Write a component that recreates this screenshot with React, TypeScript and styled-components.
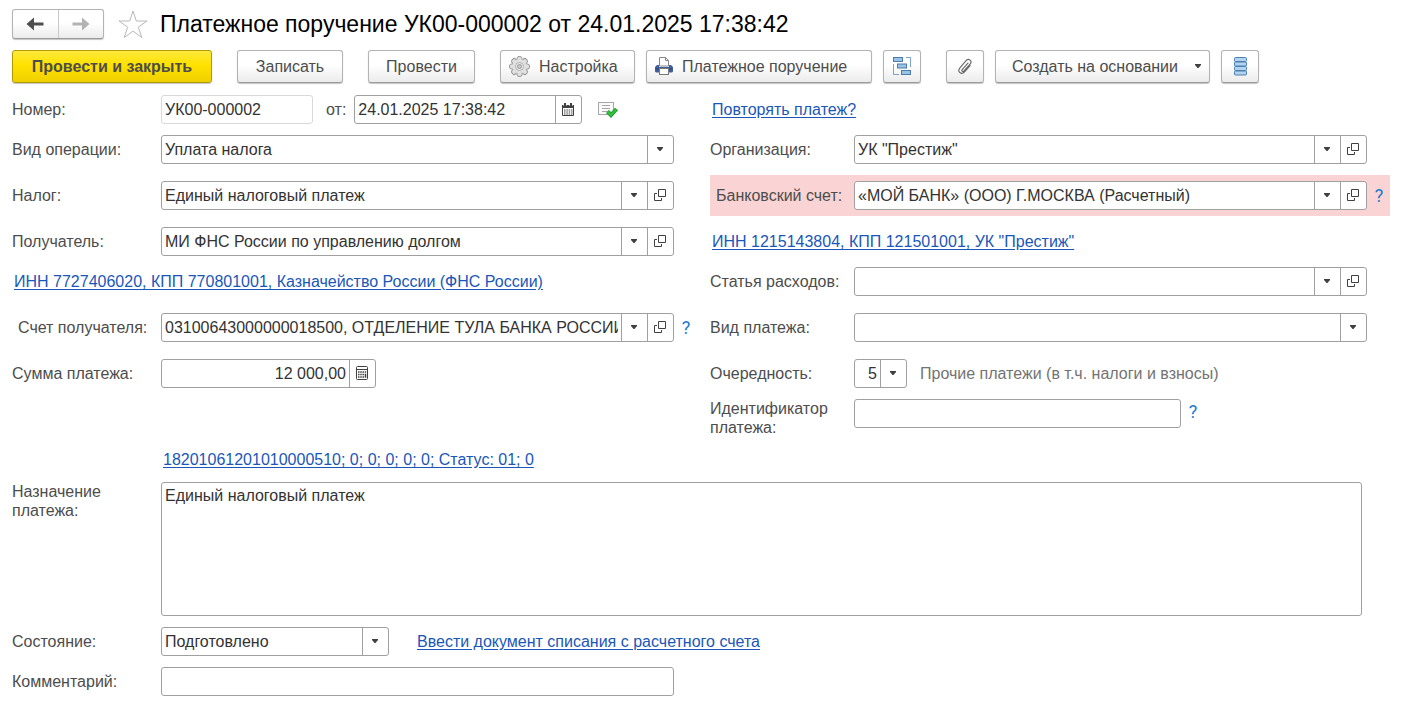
import React, { useId } from "react";
import styled, { createGlobalStyle, css } from "styled-components";

const GlobalStyle = createGlobalStyle`
  * { box-sizing: border-box; }
  body {
    margin: 0;
    background: #fff;
    color: #4d4d4d;
    font-family: "Liberation Sans", Arial, sans-serif;
    font-size: 16px;
    line-height: 19px;
  }
  button, input, select, textarea { font: inherit; color: inherit; margin: 0; }
`;

const edge = "#a0a0a0";

const Page = styled.main`
  padding: 9px 13px 9px 12px;
  min-width: 1280px;
`;

const Header = styled.header`
  display: flex;
  align-items: center;
  height: 30px;
  margin-bottom: 11px;
`;

const raised = css`
  border: 1px solid #b3b3b3;
  border-bottom-color: #9a9a9a;
  border-radius: 3px;
  background: linear-gradient(#fff 0%, #fff 45%, #ebebeb 100%);
  box-shadow: 0 1px 1px #c4c4c4;
`;

const History = styled.nav`
  ${raised}
  display: flex;
  width: 92px;
  height: 30px;
`;

const HistoryButton = styled.button`
  flex: 1;
  display: grid;
  place-items: center;
  padding: 0;
  border: 0;
  background: none;
  color: #4d4d4d;
  & + & { border-left: 1px solid #c8c8c8; }
  &:disabled { color: #b3b3b3; }
`;

const StarButton = styled.button`
  display: grid;
  place-items: center;
  width: 30px;
  height: 30px;
  margin: 0 12px 0 14px;
  padding: 0;
  border: 0;
  background: none;
`;

const Title = styled.h1`
  margin: 0;
  color: #000;
  font-size: 23px;
  font-weight: 400;
  line-height: 28px;
  white-space: nowrap;
`;

const Toolbar = styled.div`
  display: flex;
  gap: 25px;
  margin-bottom: 12px;
`;

const ToolGroup = styled.div`
  display: flex;
  gap: 11px;
`;

const ToolButton = styled.button<{ $w: number; $primary?: boolean; $start?: boolean }>`
  ${raised}
  display: flex;
  align-items: center;
  justify-content: ${(p) => (p.$start ? "flex-start" : "center")};
  gap: 9px;
  width: ${(p) => p.$w}px;
  height: 33px;
  padding: 0 8px;
  white-space: nowrap;
  ${(p) =>
    p.$primary &&
    css`
      border-color: #b09a00;
      background: linear-gradient(#ffea3c 0%, #ffe100 45%, #f0d000 100%);
      font-weight: 700;
    `}
`;

const MenuButton = styled(ToolButton)`
  justify-content: space-between;
  padding: 0 7px 0 16px;
`;

const Columns = styled.div`
  display: grid;
  grid-template-columns: minmax(0, 1fr) minmax(0, 1fr);
  column-gap: 18px;
`;

const Column = styled.div`
  display: flex;
  flex-direction: column;
  gap: 11px;
`;

const Row = styled.div<{ $tall?: boolean; $accent?: boolean }>`
  display: flex;
  align-items: center;
  min-height: 29px;
  padding: ${(p) => (p.$tall ? "6px 0" : "0")};
  background: ${(p) => (p.$accent ? "#fad4d4" : "none")};
`;

const Label = styled.label<{ $w?: number; $indent?: number }>`
  flex: none;
  width: ${(p) => (p.$w ? p.$w + "px" : "auto")};
  padding-left: ${(p) => p.$indent || 0}px;
`;

const InlineLabel = styled(Label)`
  margin: 0 8px 0 13px;
`;

const Tail = styled.div<{ $w: number }>`
  flex: none;
  width: ${(p) => p.$w}px;
  display: flex;
  justify-content: flex-end;
`;

const Box = styled.div<{ $w?: number; $muted?: boolean }>`
  display: flex;
  flex: ${(p) => (p.$w ? "none" : "1")};
  width: ${(p) => (p.$w ? p.$w + "px" : "auto")};
  min-width: 0;
  height: 29px;
  border: 1px solid ${(p) => (p.$muted ? "#d9d9d9" : edge)};
  border-radius: 3px;
  background: #fff;
  color: #333;
`;

const Input = styled.input<{ $right?: boolean }>`
  flex: 1;
  min-width: 0;
  padding: 0 3px;
  border: 0;
  outline: 0;
  background: none;
  text-align: ${(p) => (p.$right ? "right" : "left")};
`;

const Picker = styled.div`
  flex: 1;
  min-width: 0;
  display: grid;
  grid-template-columns: minmax(0, 1fr) 26px;
`;

const Select = styled.select<{ $right?: boolean }>`
  grid-area: 1 / 1 / 2 / 3;
  min-width: 0;
  width: 100%;
  padding: 0 29px 0 3px;
  border: 0;
  outline: 0;
  appearance: none;
  background: none;
  text-align: ${(p) => (p.$right ? "right" : "left")};
  text-align-last: ${(p) => (p.$right ? "right" : "left")};
`;

const ArrowCell = styled.span`
  grid-area: 1 / 2 / 2 / 3;
  display: grid;
  place-items: center;
  border-left: 1px solid ${edge};
  pointer-events: none;
`;

const CellButton = styled.button`
  flex: none;
  width: 26px;
  display: grid;
  place-items: center;
  padding: 0;
  border: 0;
  border-left: 1px solid ${edge};
  background: none;
`;

const HelpButton = styled.button`
  width: 12px;
  padding: 0;
  border: 0;
  background: none;
  color: #1a7ad0;
  font-family: Roboto, sans-serif;
  font-size: 18px;
  text-align: center;
`;

const PlainButton = styled.button`
  display: grid;
  place-items: center;
  margin-left: 16px;
  padding: 0;
  border: 0;
  background: none;
`;

const Link = styled.a`
  margin-left: 2px;
  color: #1a57b8;
  text-decoration: underline;
  text-underline-offset: 2px;
  white-space: nowrap;
`;

const Hint = styled.span`
  margin-left: 13px;
  color: #737373;
  white-space: nowrap;
`;

const Footer = styled.div`
  display: flex;
  flex-direction: column;
  gap: 11px;
  margin-top: 11px;
`;

const CodeRow = styled.div`
  display: flex;
  align-items: center;
  height: 23px;
  padding-left: 149px;
`;

const PurposeRow = styled.div`
  display: flex;
  align-items: flex-start;
  padding-right: 28px;
`;

const TextArea = styled.textarea`
  flex: 1;
  height: 134px;
  padding: 3px;
  border: 1px solid ${edge};
  border-radius: 3px;
  outline: 0;
  resize: none;
  color: #333;
`;

const Spaced = styled.div`
  margin-left: 26px;
`;

const BackArrow = () => (
  <svg width="18" height="14" viewBox="0 0 18 14" fill="currentColor">
    <path d="M0.500 7 8 0.500V5.500H17.500V8.500H8V13.500Z" />
  </svg>
);
const ForwardArrow = () => (
  <svg width="18" height="14" viewBox="0 0 18 14" fill="currentColor">
    <path d="M17.500 7 10 0.500V5.500H0.500V8.500H10V13.500Z" />
  </svg>
);
const StarIcon = () => (
  <svg width="30" height="30" viewBox="0 0 30 30" fill="none" stroke="#b8b8b8">
    <path d="M15 2 18.300 12H29L20.300 18.200 23.800 28.500 15 22.200 6.200 28.500 9.700 18.200 1 12H11.700Z" />
  </svg>
);
const Caret = () => (
  <svg width="7" height="5" viewBox="0 0 7 5" fill="#404040">
    <path d="M0 0H6V1L3.500 4H2.500L0 1Z" />
  </svg>
);
const OpenIcon = () => (
  <svg width="13" height="13" viewBox="0 0 13 13" fill="none" stroke="#404040">
    <path d="M4.500 0.500H11.500V7.500H4.500ZM3 4.500H0.500V11.500H7.500V9" />
  </svg>
);
const CalendarIcon = () => (
  <svg width="13" height="14" viewBox="0 0 13 14">
    <path d="M0.500 2.500H11.500V12.500H0.500Z" fill="#fff" stroke="#404040" />
    <path d="M0 2H12V5H0Z" fill="#404040" />
    <path d="M3 0V3M9 0V3" stroke="#fff" strokeWidth="3" />
    <path d="M3 0V3M9 0V3" stroke="#404040" strokeWidth="2" />
    <path d="M2 7H10.500M2 9H10.500M2 11H10.500" stroke="#404040" strokeDasharray="1.500 0.830" strokeWidth="1.200" />
  </svg>
);
const CalculatorIcon = () => (
  <svg width="13" height="15" viewBox="0 0 13 15" fill="none" stroke="#404040">
    <rect x="0.500" y="0.500" width="11" height="13" rx="1" />
    <path d="M1 3.500H11" />
    <path d="M2 6H8M2 8.500H8M2 11H8" strokeWidth="1.500" strokeDasharray="1.500 0.750" />
    <path d="M9.500 5.250V6.750M9.500 7.750V11.750" strokeWidth="1.500" />
  </svg>
);
const PostedIcon = () => (
  <svg width="20" height="17" viewBox="0 0 20 17" fill="none">
    <rect x="0.500" y="1.500" width="15" height="12" fill="#fafafa" stroke="#a6a6a6" />
    <path d="M4 4.500H12M4 7.500H12M4 10.500H10" stroke="#a6a6a6" />
    <path d="M9.500 10.500 13 14 18.500 8" stroke="#1d8f28" strokeWidth="4" />
    <path d="M9.500 10.500 13 14 18.500 8" stroke="#2fc33c" strokeWidth="2.500" />
  </svg>
);
const petals = [0, 45, 90, 135, 180, 225, 270, 315];
const GearIcon = () => (
  <svg width="21" height="21" viewBox="0 0 21 21" fill="none">
    <g fill="#e0e0e0" stroke="#999">
      {petals.map((a) => (
        <rect key={a} x="8" y="0.500" width="5" height="6" rx="2" transform={`rotate(${a} 10.500 10.500)`} />
      ))}
    </g>
    <circle cx="10.500" cy="10.500" r="7.200" fill="#e0e0e0" />
    <circle cx="10.500" cy="10.500" r="4" fill="#ececec" stroke="#b0b0b0" />
    <circle cx="10.500" cy="10.500" r="2" fill="#c8c8c8" stroke="#999" />
  </svg>
);
const PrinterIcon = () => (
  <svg width="18" height="19" viewBox="0 0 18 19">
    <path d="M4.500 9V0.500H10.500L13.500 3.500V9Z" fill="#fff" stroke="#888" />
    <path d="M10.500 0.500V3.500H13.500" fill="none" stroke="#888" />
    <path d="M2 8H4V10H14V8H16L18 10V14.500L17 15.500H1L0 14.500V10Z" fill="#3e5f9c" />
    <path d="M1 12H17" stroke="#28406f" />
    <rect x="4.500" y="11.500" width="9" height="6" fill="#fff" stroke="#777" />
  </svg>
);
const StructureIcon = () => (
  <svg width="19" height="19" viewBox="0 0 19 19" fill="none">
    <path d="M13 0.500H17.500V10M0.500 7V17.500H6" stroke="#7ba4ca" />
    <g fill="#9cc2e4" stroke="#4a7dad">
      <rect x="0.500" y="0.500" width="9" height="4" />
      <rect x="4.500" y="7" width="9" height="4" />
      <rect x="8.500" y="13.500" width="9" height="4" />
    </g>
  </svg>
);
const ClipIcon = () => (
  <svg width="16" height="17" viewBox="0 0 18 20" fill="none" stroke="#6b6b6b" strokeWidth="1.400" strokeLinecap="round">
    <path d="M12.500 6 5.900 13.400c-1.500 1.800.5 3.300 1.900 1.900l7.200-8.200c3-3.700-1.600-7.300-4.700-4L3.200 11.300c-4 4.600 1.500 9.100 5.300 5l6.500-7.300" />
  </svg>
);
const RegisterIcon = () => (
  <svg width="13" height="19" viewBox="0 0 13 19" fill="#b3d3ee" stroke="#4a80b0">
    <rect x="0.500" y="0.500" width="12" height="4" rx="1" />
    <rect x="0.500" y="5" width="12" height="4" rx="1" />
    <rect x="0.500" y="9.500" width="12" height="4" rx="1" />
    <rect x="0.500" y="14" width="12" height="4" rx="1" />
  </svg>
);

interface PickFieldProps {
  id: string;
  value: string;
  width?: number;
  right?: boolean;
  openable?: boolean;
}

const PickField = ({ id, value, width, right, openable }: PickFieldProps) => (
  <Box $w={width}>
    <Picker>
      <Select id={id} defaultValue={value} $right={right}>
        <option value={value}>{value}</option>
      </Select>
      <ArrowCell>
        <Caret />
      </ArrowCell>
    </Picker>
    {openable && (
      <CellButton type="button" aria-label="Открыть">
        <OpenIcon />
      </CellButton>
    )}
  </Box>
);

interface PickRowProps {
  label: string;
  value: string;
  side: "left" | "right";
  tall?: boolean;
  accent?: boolean;
  indent?: number;
  openable?: boolean;
  help?: boolean;
}

const PickRow = ({ label, value, side, tall, accent, indent, openable, help }: PickRowProps) => {
  const id = useId();
  return (
    <Row $tall={tall} $accent={accent}>
      <Label htmlFor={id} $w={side === "left" ? 149 : 144} $indent={indent}>
        {label}
      </Label>
      <PickField id={id} value={value} openable={openable} />
      <Tail $w={side === "left" ? 18 : 23}>{help && <Help inset={side === "right"} />}</Tail>
    </Row>
  );
};

const HelpSlot = styled.span<{ $inset?: boolean }>`
  display: flex;
  padding-right: ${(p) => (p.$inset ? 5 : 0)}px;
`;

const Help = ({ inset }: { inset?: boolean }) => (
  <HelpSlot $inset={inset}>
    <HelpButton type="button" aria-label="Справка">
      ?
    </HelpButton>
  </HelpSlot>
);

const IdentifierRow = styled(Row)`
  align-items: flex-start;
`;

const IdentifierHelp = styled.div`
  margin: 3px 0 0 6px;
`;

export default function App() {
  return (
    <Page>
      <GlobalStyle />
      <Header>
        <History>
          <HistoryButton type="button" aria-label="Назад">
            <BackArrow />
          </HistoryButton>
          <HistoryButton type="button" aria-label="Вперед" disabled>
            <ForwardArrow />
          </HistoryButton>
        </History>
        <StarButton type="button" aria-label="В избранное">
          <StarIcon />
        </StarButton>
        <Title>Платежное поручение УК00-000002 от 24.01.2025 17:38:42</Title>
      </Header>

      <Toolbar>
        <ToolButton type="button" $w={200} $primary>
          Провести и закрыть
        </ToolButton>
        <ToolButton type="button" $w={106}>
          Записать
        </ToolButton>
        <ToolButton type="button" $w={107}>
          Провести
        </ToolButton>
        <ToolGroup>
          <ToolButton type="button" $w={135} $start>
            <GearIcon />
            Настройка
          </ToolButton>
          <ToolButton type="button" $w={226} $start>
            <PrinterIcon />
            Платежное поручение
          </ToolButton>
          <ToolButton type="button" $w={38} aria-label="Структура подчиненности">
            <StructureIcon />
          </ToolButton>
        </ToolGroup>
        <ToolGroup>
          <ToolButton type="button" $w={38} aria-label="Присоединенные файлы">
            <ClipIcon />
          </ToolButton>
          <MenuButton type="button" $w={215}>
            Создать на основании
            <Caret />
          </MenuButton>
          <ToolButton type="button" $w={38} aria-label="Движения документа">
            <RegisterIcon />
          </ToolButton>
        </ToolGroup>
      </Toolbar>

      <Columns>
        <Column>
          <Row>
            <Label htmlFor="number" $w={149}>
              Номер:
            </Label>
            <Box $w={152} $muted>
              <Input id="number" defaultValue="УК00-000002" />
            </Box>
            <InlineLabel htmlFor="date">от:</InlineLabel>
            <Box $w={228}>
              <Input id="date" defaultValue="24.01.2025 17:38:42" />
              <CellButton type="button" aria-label="Календарь">
                <CalendarIcon />
              </CellButton>
            </Box>
            <PlainButton type="button" aria-label="Документ проведен">
              <PostedIcon />
            </PlainButton>
          </Row>
          <PickRow side="left" label="Вид операции:" value="Уплата налога" />
          <PickRow side="left" label="Налог:" value="Единый налоговый платеж" tall openable />
          <PickRow side="left" label="Получатель:" value="МИ ФНС России по управлению долгом" openable />
          <Row>
            <Link href="#payee">ИНН 7727406020, КПП 770801001, Казначейство России (ФНС России)</Link>
          </Row>
          <PickRow
            side="left"
            label="Счет получателя:"
            value="03100643000000018500, ОТДЕЛЕНИЕ ТУЛА БАНКА РОССИИ"
            indent={6}
            tall
            openable
            help
          />
          <Row>
            <Label htmlFor="amount" $w={149}>
              Сумма платежа:
            </Label>
            <Box $w={215}>
              <Input id="amount" defaultValue="12 000,00" $right />
              <CellButton type="button" aria-label="Калькулятор">
                <CalculatorIcon />
              </CellButton>
            </Box>
          </Row>
        </Column>

        <Column>
          <Row>
            <Link href="#repeat">Повторять платеж?</Link>
          </Row>
          <PickRow side="right" label="Организация:" value={'УК "Престиж"'} openable />
          <PickRow
            side="right"
            label="Банковский счет:"
            value="«МОЙ БАНК» (ООО) Г.МОСКВА (Расчетный)"
            indent={6}
            tall
            accent
            openable
            help
          />
          <Row>
            <Link href="#payer">ИНН 1215143804, КПП 121501001, УК "Престиж"</Link>
          </Row>
          <PickRow side="right" label="Статья расходов:" value="" openable />
          <PickRow side="right" label="Вид платежа:" value="" tall />
          <Row>
            <Label htmlFor="priority" $w={144}>
              Очередность:
            </Label>
            <PickField id="priority" value="5" width={53} right />
            <Hint>Прочие платежи (в т.ч. налоги и взносы)</Hint>
          </Row>
          <IdentifierRow>
            <Label htmlFor="identifier" $w={144}>
              Идентификатор
              <br />
              платежа:
            </Label>
            <Box $w={327}>
              <Input id="identifier" />
            </Box>
            <IdentifierHelp>
              <Help />
            </IdentifierHelp>
          </IdentifierRow>
        </Column>
      </Columns>

      <Footer>
        <CodeRow>
          <Link href="#budget">18201061201010000510; 0; 0; 0; 0; 0; Статус: 01; 0</Link>
        </CodeRow>
        <PurposeRow>
          <Label htmlFor="purpose" $w={149}>
            Назначение
            <br />
            платежа:
          </Label>
          <TextArea id="purpose" defaultValue="Единый налоговый платеж" />
        </PurposeRow>
        <Row>
          <Label htmlFor="state" $w={149}>
            Состояние:
          </Label>
          <PickField id="state" value="Подготовлено" width={228} />
          <Spaced>
            <Link href="#writeoff">Ввести документ списания с расчетного счета</Link>
          </Spaced>
        </Row>
        <Columns>
          <Row>
            <Label htmlFor="comment" $w={149}>
              Комментарий:
            </Label>
            <Box>
              <Input id="comment" />
            </Box>
            <Tail $w={18} />
          </Row>
        </Columns>
      </Footer>
    </Page>
  );
}
